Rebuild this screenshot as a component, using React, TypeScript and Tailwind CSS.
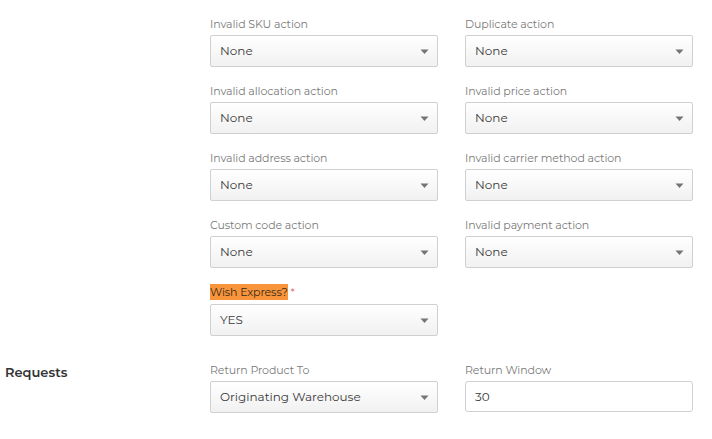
import React from "react";

const font = { fontFamily: '"Montserrat", "Inter", "Liberation Sans", sans-serif' };

function Arrow() {
  return (
    <svg width="9" height="6" viewBox="0 0 9 6" className="absolute right-[8px] top-[13px]">
      <path d="M0.5 0.5 L8.5 0.5 L4.5 5 Z" fill="#747474" />
    </svg>
  );
}

function Select({ value }: { value: string }) {
  return (
    <div className="relative h-[32px] w-[228px] rounded-[2px] border border-[#d0d0d0] bg-gradient-to-b from-white to-[#f1f1f1] pl-[9px] text-[12px] leading-[30px] text-[#3a3a3a]">
      {value}
      <Arrow />
    </div>
  );
}

function Field({ label, value, highlight }: { label: string; value: string; highlight?: boolean }) {
  return (
    <div className="flex flex-col">
      <div className={(highlight ? "h-[15px] mb-[4px] " : "h-[14px] mb-[4px] ") + "text-[11px] leading-[14px] tracking-[-0.1px] text-[#7a7a7a]"}>
        {highlight ? (
          <span>
            <span className="bg-[#f7943c] py-[1px] text-[#3a2a1a]">{label}</span>
            <span className="ml-[3px] text-[#e0707a]">*</span>
          </span>
        ) : (
          label
        )}
      </div>
      <Select value={value} />
    </div>
  );
}

export default function App() {
  const rows: [string, string][] = [
    ["Invalid SKU action", "Duplicate action"],
    ["Invalid allocation action", "Invalid price action"],
    ["Invalid address action", "Invalid carrier method action"],
    ["Custom code action", "Invalid payment action"],
  ];
  return (
    <div className="h-[439px] w-[712px] overflow-hidden bg-white" style={font}>
      <div className="flex pt-[17px]">
        <div className="w-[210px]" />
        <div className="flex flex-col gap-[17px]">
          {rows.map(([a, b]) => (
            <div key={a} className="flex gap-[27px]">
              <Field label={a} value="None" />
              <Field label={b} value="None" />
            </div>
          ))}
          <div className="flex gap-[27px]">
            <Field label="Wish Express?" value="YES" highlight />
          </div>
        </div>
      </div>
      <div className="mt-[27px] flex">
        <div className="w-[210px] pl-[5px] pt-[2px] text-[13px] font-semibold leading-[14px] text-[#333]">Requests</div>
        <div className="flex gap-[27px]">
          <Field label="Return Product To" value="Originating Warehouse" />
          <div className="flex flex-col">
            <div className="mb-[4px] h-[14px] text-[11px] leading-[14px] tracking-[-0.1px] text-[#7a7a7a]">Return Window</div>
            <div className="h-[31px] w-[228px] rounded-[3px] border border-[#d0d0d0] bg-white pl-[9px] text-[12px] leading-[29px] text-[#3a3a3a]">
              30
            </div>
          </div>
        </div>
      </div>
    </div>
  );
}
